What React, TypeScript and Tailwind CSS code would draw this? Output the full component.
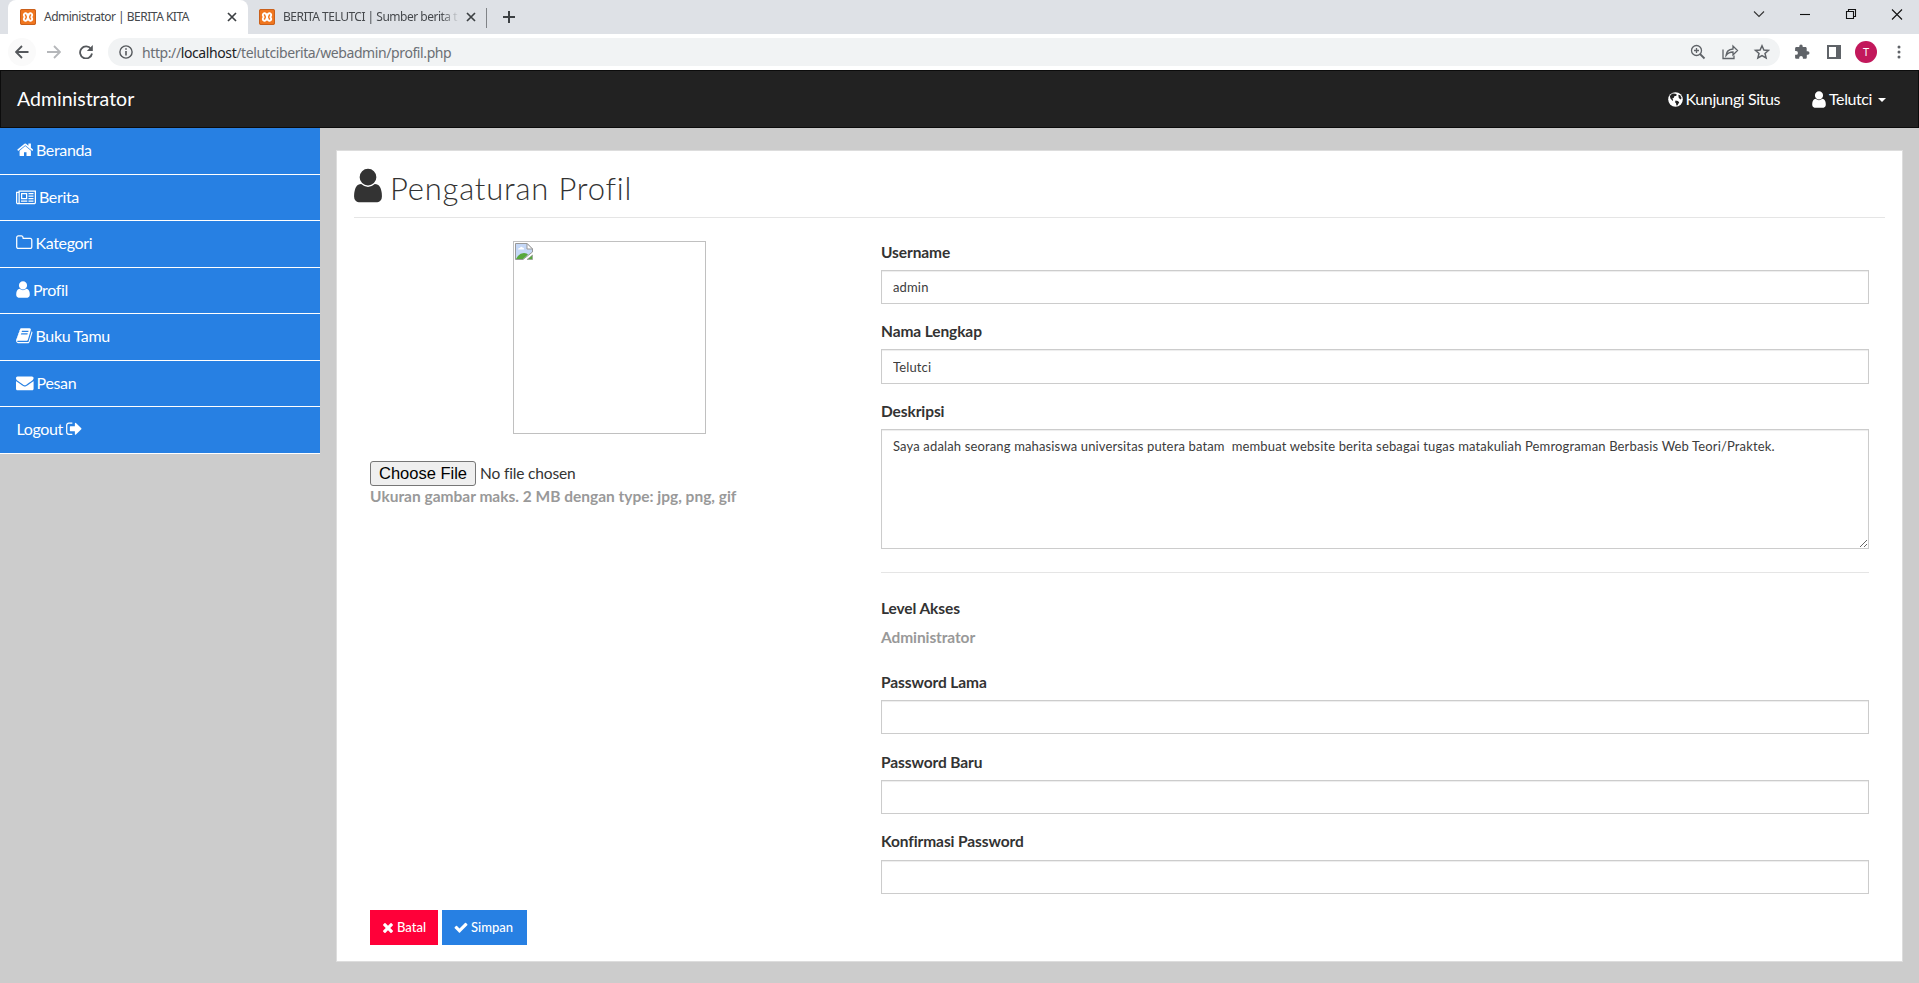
import React from "react";

const paths = {
  user: "M1536 1399q0 109-62.5 187t-150.5 78h-854q-88 0-150.5-78t-62.5-187q0-85 8.5-160.5t31.5-152 58.5-131 94-89 134.5-34.5q131 128 313 128t313-128q76 0 134.5 34.5t94 89 58.5 131 31.5 152 8.5 160.5zm-256-887q0 159-112.5 271.5t-271.5 112.5-271.5-112.5-112.5-271.5 112.5-271.5 271.5-112.5 271.5 112.5 112.5 271.5z",
  home: "M1472 992v480q0 26-19 45t-45 19h-384v-384h-256v384h-384q-26 0-45-19t-19-45v-480q0-1 .5-3t.5-3l575-474 575 474q1 2 1 6zm223-69l-62 74q-8 9-21 11h-3q-13 0-21-7l-692-577-692 577q-12 8-24 7-13-2-21-11l-62-74q-8-10-7-23.5t11-21.5l719-599q32-26 76-26t76 26l244 204v-195q0-14 9-23t23-9h192q14 0 23 9t9 23v408l219 182q10 8 11 21.5t-7 23.5z",
  news: "M1024 640h-384v384h384v-384zm128 640v128h-640v-128h640zm0-768v640h-640v-640h640zm640 768v128h-512v-128h512zm0-256v128h-512v-128h512zm0-256v128h-512v-128h512zm0-256v128h-512v-128h512zm-1536 960v-960h-128v960q0 26 19 45t45 19 45-19 19-45zm1664 0v-1088h-1536v1088q0 33-11 64h1483q26 0 45-19t19-45zm128-1216v1216q0 80-56 136t-136 56h-1664q-80 0-136-56t-56-136v-1088h256v-128h1792z",
  folder: "M1600 1312v-704q0-40-28-68t-68-28h-704q-40 0-68-28t-28-68v-64q0-40-28-68t-68-28h-320q-40 0-68 28t-28 68v960q0 40 28 68t68 28h1216q40 0 68-28t28-68zm128-704v704q0 92-66 158t-158 66h-1216q-92 0-158-66t-66-158v-960q0-92 66-158t158-66h320q92 0 158 66t66 158v32h672q92 0 158 66t66 158z",
  envelope: "M1792 710v794q0 66-47 113t-113 47h-1472q-66 0-113-47t-47-113v-794q44 49 101 87 362 246 497 345 57 42 92.5 65.5t94.5 48 110 24.5h2q51 0 110-24.5t94.5-48 92.5-65.5q170-123 498-345 57-39 100-87zm0-294q0 79-49 151t-122 123q-376 261-468 325-10 7-42.5 31t-54 38.5-52 32.5-57.5 27-50 9h-2q-23 0-50-9t-57.5-27-52-32.5-54-38.5-42.5-31q-91-64-262-182.5t-205-142.5q-62-42-117-115.5t-55-136.5q0-78 41.5-130t118.5-52h1472q65 0 112.5 47t47.5 113z",
  book: "M1703 478q40 57 18 129l-275 906q-19 64-76.5 107.5t-122.5 43.5h-923q-77 0-148.5-53.5t-99.5-131.5q-24-67-2-127 0-4 3-27t4-37q1-8-3-21.5t-3-19.5q2-11 8-21t16.5-23.5 16.5-23.5q23-38 45-91.5t30-91.5q3-10 .5-30t-.5-28q3-11 17-28t17-23q21-36 42-92t25-90q1-9-2.5-32t.5-28q4-13 22-30.5t22-22.5q19-26 42.5-84.5t27.5-96.5q1-8-3-25.5t-2-26.5q2-8 9-18t18-23 17-21q8-12 16.5-30.5t15-35 16-36 19.5-32 26.5-23.5 36-11.5 47.5 5.5l-1 3q38-9 51-9h761q74 0 114 56t18 130l-274 906q-36 119-71.5 153.5t-128.5 34.5h-869q-27 0-38 15-11 16-1 43 24 70 144 70h923q29 0 56-15.5t35-41.5l300-987q7-22 5-57 38 15 59 43zm-1064 2q-4 13 2 22.5t20 9.5h608q13 0 25.5-9.5t16.5-22.5l21-64q4-13-2-22.5t-20-9.5h-608q-13 0-25.5 9.5t-16.5 22.5zm-83 256q-4 13 2 22.5t20 9.5h608q13 0 25.5-9.5t16.5-22.5l21-64q4-13-2-22.5t-20-9.5h-608q-13 0-25.5 9.5t-16.5 22.5z",
  signout: "M704 1440q0 4 1 20t.5 26.5-3 23.5-10 19.5-20.5 6.5h-320q-119 0-203.5-84.5t-84.5-203.5v-704q0-119 84.5-203.5t203.5-84.5h320q13 0 22.5 9.5t9.5 22.5q0 4 1 20t.5 26.5-3 23.5-10 19.5-20.5 6.5h-320q-66 0-113 47t-47 113v704q0 66 47 113t113 47h312l11.5 1 11.5 3 8 5.5 7 9 2 13.5zm928-544q0 26-19 45l-544 544q-19 19-45 19t-45-19-19-45v-288h-448q-26 0-45-19t-19-45v-384q0-26 19-45t45-19h448v-288q0-26 19-45t45-19 45 19l544 544q19 19 19 45z",
  times: "M1490 1322q0 40-28 68l-136 136q-28 28-68 28t-68-28l-294-294-294 294q-28 28-68 28t-68-28l-136-136q-28-28-28-68t28-68l294-294-294-294q-28-28-28-68t28-68l136-136q28-28 68-28t68 28l294 294 294-294q28-28 68-28t68 28l136 136q28 28 28 68t-28 68l-294 294 294 294q28 28 28 68z",
  check: "M1671 566q0 40-28 68l-724 724-136 136q-28 28-68 28t-68-28l-136-136-362-362q-28-28-28-68t28-68l136-136q28-28 68-28t68 28l294 295 656-657q28-28 68-28t68 28l136 136q28 28 28 68z",
};

function Glyph({ name, box, className }: { name: keyof typeof paths; box: string; className: string }) {
  return (
    <svg viewBox={box} className={"shrink-0 " + className} fill="currentColor">
      <path d={paths[name]} />
    </svg>
  );
}

function Favicon() {
  return (
    <svg viewBox="0 0 16 16" className="size-4 shrink-0">
      <rect width="16" height="16" rx="2" fill="#f0761f" />
      <rect x="0.5" y="0.5" width="15" height="15" rx="1.5" fill="none" stroke="#c9601c" />
      <path d="M7.600 7.200C7.600 3.400 3.800 3.600 3.800 6c0 1 .8 1.300.8 2s-.8 1-.8 2c0 2.400 3.800 2.600 3.800-1.200M8.400 7.200C8.400 3.400 12.200 3.600 12.200 6c0 1-.8 1.300-.8 2s.8 1 .8 2c0 2.400-3.800 2.600-3.800-1.200M7 8h2" fill="none" stroke="#fff" strokeWidth="1.900" />
    </svg>
  );
}

function CloseX() {
  return (
    <svg viewBox="0 0 10 10" className="size-[10px] shrink-0" stroke="#3c4043" strokeWidth="1.7">
      <path d="M1 1l8 8M9 1l-8 8" />
    </svg>
  );
}

function Browser() {
  return (
    <div className="h-[70px] font-['Noto_Sans','Open_Sans',sans-serif] text-[12px]">
      <div className="flex h-[34px] bg-[#dee1e6]">
        <div className="ml-2 flex h-full w-60 items-center rounded-t-lg bg-white pl-3 pr-[11px]">
          <Favicon />
          <span className="ml-2 flex-1 whitespace-nowrap text-[#45484c] tracking-[-0.5px]">Administrator | BERITA KITA</span>
          <CloseX />
        </div>
        <div className="flex w-[238px] items-center pl-[11px]">
          <Favicon />
          <span className="ml-2 w-[176px] overflow-hidden whitespace-nowrap text-[#45484c] tracking-[-0.5px] [mask-image:linear-gradient(90deg,#000_90%,transparent)]">BERITA TELUTCI | Sumber berita t</span>
          <span className="ml-[7px]"><CloseX /></span>
        </div>
        <div className="mt-2 h-5 w-px bg-[#808387]" />
        <svg viewBox="0 0 12 12" className="ml-4 mt-[11px] size-3" stroke="#3c4043" strokeWidth="2"><path d="M6 0v12M0 6h12" /></svg>
        <svg viewBox="-10 0 170 34" className="ml-auto h-[34px] w-[170px]" fill="none" stroke="#111" strokeWidth="1.1">
          <path d="M-5 11.500l5 5 5-5" stroke="#333" />
          <path d="M41 14.500h10" />
          <path d="M87.500 11.500h7v7h-7zM89.500 11.500v-2h7v7h-2" />
          <path d="M133 9.500l10 10M143 9.500l-10 10" />
        </svg>
      </div>
      <div className="flex h-9 items-center bg-white">
        <div className="ml-2 flex size-7 items-center justify-center rounded-full bg-[#fafafa]">
          <svg viewBox="0 0 14 14" className="size-[14px]" fill="none" stroke="#55585c" strokeWidth="1.8"><path d="M13.500 7H1.500M7 1L1 7l6 6" /></svg>
        </div>
        <svg viewBox="0 0 14 14" className="ml-[11px] size-[14px]" fill="none" stroke="#b5b7ba" strokeWidth="1.8"><path d="M0 7h12.500M7 1l6 6-6 6" /></svg>
        <svg viewBox="0 0 14 14" className="ml-[18px] size-[14px]" fill="none" stroke="#55585c" strokeWidth="1.8"><path d="M12 4A6 6 0 1 0 13 8.500" /><path d="M13.800 0v6h-6z" fill="#55585c" stroke="none" /></svg>
        <div className="ml-[15px] flex h-7 w-[1672px] items-center rounded-full bg-[#f1f3f4] pl-[11px]">
          <svg viewBox="0 0 14 14" className="size-[14px]" fill="none" stroke="#55585c" strokeWidth="1.4"><circle cx="7" cy="7" r="6.100" /><path d="M7 6v4.500M7 3.300v1.500" strokeWidth="1.600" /></svg>
          <span className="ml-[9px] text-[14px] tracking-[-0.4px] text-[#6b6f74]">http://<span className="text-[#202124]">localhost</span>/telutciberita/webadmin/profil.php</span>
          <svg viewBox="0 0 80 16" className="ml-auto mr-[10px] h-4 w-20" fill="none" stroke="#5f6368" strokeWidth="1.300">
            <circle cx="6.500" cy="6.500" r="5" /><path d="M10 10l4.500 4.500" strokeWidth="1.800" /><path d="M4 6.500h5M6.500 4v5" />
            <path d="M33 5.500v9h11v-3" /><path d="M36 11.500q.5-6 7-6.500V2l4.500 4.500L43 11V8q-4.500 0-7 3.500z" />
            <path d="M72 1.800l1.900 4.200 4.600.4-3.500 3 1.100 4.500-4.100-2.400-4.100 2.400L69 9.400l-3.500-3 4.600-.4z" strokeWidth="1.500" />
          </svg>
        </div>
        <svg viewBox="0 0 16 16" className="ml-[14px] size-4" fill="#5f6368"><path d="M13.700 7.300h-1V4.500c0-.8-.6-1.400-1.300-1.400H8.700V2.200a1.700 1.700 0 0 0-3.400 0v.9H2.500c-.8 0-1.400.6-1.400 1.400v2.600h1a1.800 1.800 0 0 1 0 3.700h-1v2.700c0 .7.600 1.300 1.400 1.300h2.700v-1a1.800 1.800 0 0 1 3.700 0v1h2.600c.7 0 1.300-.6 1.300-1.300v-2.800h1a1.700 1.700 0 0 0 0-3.400z" /></svg>
        <svg viewBox="0 0 14 14" className="ml-[17px] size-[14px]"><path d="M0 0h14v14H0zM2 2v10h7V2z" fill="#5f6368" fillRule="evenodd" /></svg>
        <div className="ml-[14px] flex size-[22px] items-center justify-center rounded-full bg-[#c2185b] text-[11px] text-white">T</div>
        <svg viewBox="0 0 4 14" className="ml-5 h-[14px] w-1" fill="#5f6368"><circle cx="2" cy="2" r="1.500" /><circle cx="2" cy="7" r="1.500" /><circle cx="2" cy="12" r="1.500" /></svg>
      </div>
    </div>
  );
}

const row = "flex items-center border-b border-white bg-[#2780e3] pb-[2px] pl-4 text-[16px] tracking-[-0.35px] text-white";

function Sidebar() {
  return (
    <nav className="w-80 shrink-0">
      <div className={row + " h-[47px]"}><Glyph name="home" box="64 0 1664 1792" className="ml-[0.500px] h-[17.600px] w-[16.500px]" /><span className="ml-[3px]">Beranda</span></div>
      <div className={row + " h-[46px]"}><Glyph name="news" box="0 0 2048 1792" className="h-[17.600px] w-5" /><span className="ml-[3px]">Berita</span></div>
      <div className={row + " h-[47px]"}><Glyph name="folder" box="64 0 1664 1792" className="h-[17.600px] w-[16.500px]" /><span className="ml-[3px]">Kategori</span></div>
      <div className={row + " h-[46px]"}><Glyph name="user" box="256 0 1280 1792" className="h-[19px] w-[14px]" /><span className="ml-[3px]">Profil</span></div>
      <div className={row + " h-[47px]"}><Glyph name="book" box="64 0 1664 1792" className="h-[17.600px] w-[16.500px]" /><span className="ml-[3px]">Buku Tamu</span></div>
      <div className={row + " h-[46px]"}><Glyph name="envelope" box="0 0 1792 1792" className="h-[17.600px] w-[17.600px]" /><span className="ml-[3px]">Pesan</span></div>
      <div className={row + " h-[47px]"}><span className="ml-[0.500px]">Logout</span><Glyph name="signout" box="64 0 1664 1792" className="ml-[3px] h-[17.600px] w-[16.500px]" /></div>
    </nav>
  );
}

function Label({ children, className }: { children: React.ReactNode; className: string }) {
  return <div className={"h-5 text-[15.500px] font-bold leading-[18px] tracking-[-0.1px] " + className}>{children}</div>;
}

const field = "block w-full border border-[#ccc] bg-white px-[11px] text-[13px] tracking-[0.145px] text-[#3c3c3c] shadow-[inset_0_1px_1px_rgba(0,0,0,0.075)] outline-none";

export default function App() {
  return (
    <div className="flex h-[983px] w-full flex-col overflow-hidden bg-[#ccc] font-['Lato',sans-serif] text-[#333]">
      <Browser />
      <header className="flex h-[58px] items-center border border-[#0c0c0c] bg-[#222] text-white">
        <span className="ml-4 text-[19.500px]">Administrator</span>
        <div className="ml-auto flex items-center text-[16px] tracking-[-0.4px]">
          <svg viewBox="0 0 16 16" className="size-[15px]"><circle cx="8" cy="8" r="7.800" fill="#fff" /><path d="M3 3l2-1.500 3 .3 1.500 1-1 1.500-1.500 0-1 2-1.500.7 1 1.200L5 9.500 2.600 6.800 2 4.500zM8 9l2.500.5 1.500 1.500-2 3.500-1 0-.5-2.500L7.500 11zM11 3l2 .5 1.500 3-1 1.500-2-1.500z" fill="#222" /></svg>
          <span className="ml-[3px]">Kunjungi Situs</span>
          <Glyph name="user" box="256 0 1280 1792" className="ml-8 h-[19px] w-[14px]" />
          <span className="ml-[3px]">Telutci</span>
          <svg viewBox="0 0 8 4" className="ml-[6px] mr-8 mt-[2px] h-1 w-2" fill="#fff"><path d="M0 0h8L4 4z" /></svg>
        </div>
      </header>
      <div className="flex flex-1">
        <Sidebar />
        <main className="ml-4 mt-[22px] h-[812px] w-[1567px] border border-[#ddd] bg-white px-[17px]">
          <h1 className="flex h-[66px] items-center pt-[2px] text-[31px] font-light">
            <Glyph name="user" box="256 0 1280 1792" className="h-[39px] w-7" />
            <span className="ml-2 pt-[6px] tracking-[0.800px]">Pengaturan Profil</span>
          </h1>
          <hr className="border-[#e5e5e5]" />
          <div className="flex px-4">
            <section className="w-[511px]">
              <div className="ml-[143px] mt-[23px] h-[193px] w-[193px] border border-[#c0c0c0] p-px">
                <svg viewBox="0 0 18 17" className="h-[17px] w-[18px]">
                  <path d="M.5.5h11.500l5.500 5.500v3L8 16.500H.5z" fill="#c5d8f7" stroke="#999" />
                  <path d="M12 .5V6h5.500z" fill="#fff" stroke="#999" />
                  <path d="M3 6.500q0-2 2-1.500 1-2 2.500-.5 2 0 1.500 2z" fill="#fff" />
                  <path d="M1 16q3-6 8-6 3 0 4 1.500L8 16z" fill="#57a83c" />
                  <path d="M12 16.500l5.500-4.500v4.500z" fill="#57a83c" stroke="#999" strokeWidth=".7" />
                </svg>
              </div>
              <div className="mt-[27px] flex h-[25px] items-center">
                <button className="h-[25px] w-[106px] rounded-[3px] border border-[#767676] bg-[#efefef] font-['Liberation_Sans',Arial,sans-serif] text-[16.500px] leading-none text-black">Choose File</button>
                <span className="ml-1 text-[15.500px] tracking-[-0.150px]">No file chosen</span>
              </div>
              <p className="-mt-px text-[15.500px] font-bold text-[#999]">Ukuran gambar maks. 2 MB dengan type: jpg, png, gif</p>
            </section>
            <section className="w-[988px] pt-[25px]">
              <Label className="">Username</Label>
              <input className={field + " mt-[7px] h-[34px]"} defaultValue="admin" />
              <Label className="mt-[18px]">Nama Lengkap</Label>
              <input className={field + " mt-[7px] h-[35px]"} defaultValue="Telutci" />
              <Label className="mt-[18px]">Deskripsi</Label>
              <textarea className={field + " mt-[7px] h-[120px] resize py-[6px] leading-5"} defaultValue="Saya adalah seorang mahasiswa universitas putera batam  membuat website berita sebagai tugas matakuliah Pemrograman Berbasis Web Teori/Praktek." />
              <hr className="mt-[23px] border-[#e5e5e5]" />
              <Label className="mt-[26px]">Level Akses</Label>
              <Label className="mt-[9px] text-[#999]">Administrator</Label>
              <Label className="mt-[25px]">Password Lama</Label>
              <input type="password" className={field + " mt-[7px] h-[34px]"} />
              <Label className="mt-[19px]">Password Baru</Label>
              <input type="password" className={field + " mt-[7px] h-[34px]"} />
              <Label className="mt-[18px]">Konfirmasi Password</Label>
              <input type="password" className={field + " mt-[8px] h-[34px]"} />
            </section>
          </div>
          <div className="mt-4 flex gap-1 px-4 text-[13px] font-medium text-white">
            <button className="flex h-[35px] w-[68px] items-center bg-[#ff0039] pl-3"><Glyph name="times" box="256 0 1280 1792" className="h-[15px] w-3" /><span className="ml-[3px]">Batal</span></button>
            <button className="flex h-[35px] w-[85px] items-center bg-[#2780e3] pl-3"><Glyph name="check" box="64 0 1664 1792" className="h-[15px] w-[14px]" /><span className="ml-[3px]">Simpan</span></button>
          </div>
        </main>
      </div>
    </div>
  );
}
